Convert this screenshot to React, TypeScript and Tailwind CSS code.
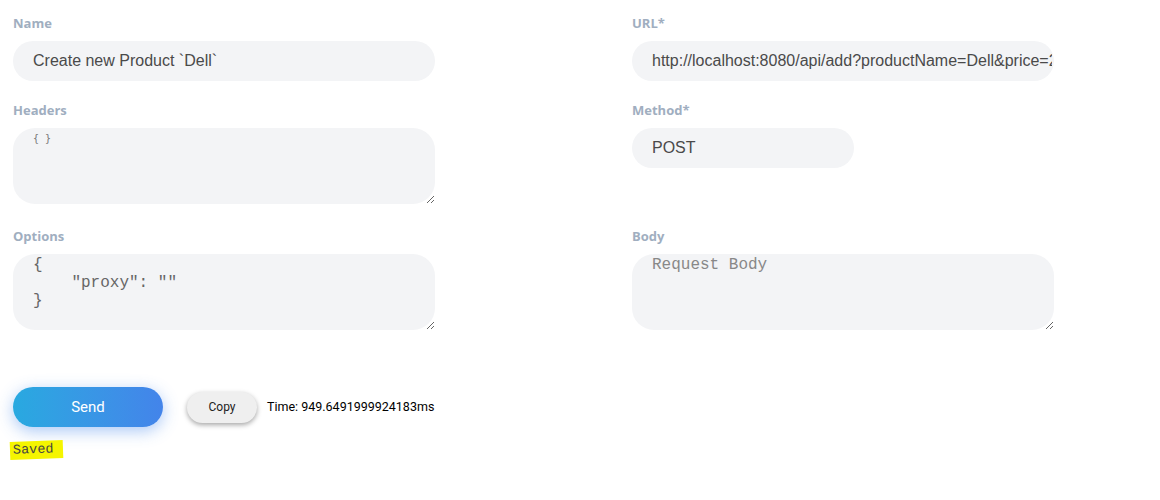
import React from "react";

const labelCls =
  "block h-[18px] mb-[9px] text-[13px] leading-[18px] font-bold text-[#a0aec0] [font-family:'Open_Sans',sans-serif]";
const inputCls =
  "block h-10 rounded-full bg-[#f3f4f6] pl-5 pr-0.5 text-[16px] text-[#4a4a4a] outline-none [font-family:'Liberation_Sans',Arial,sans-serif]";
const areaBase =
  "block h-[76px] w-[422px] rounded-[22px] bg-[#f3f4f6] pl-5 pr-2 outline-none placeholder:text-[#888]";
const areaCls = `${areaBase} pt-[2px] text-[16px] leading-[18px] text-[#666] [font-family:'Liberation_Mono','Courier_New',monospace]`;

export default function App() {
  return (
    <div className="min-h-[500px] w-[1160px] bg-white pt-[14px]">
      <div className="grid grid-cols-[619px_1fr] gap-y-[20px] pl-[13px]">
        <div>
          <label className={labelCls}>Name</label>
          <input className={`${inputCls} w-[422px]`} defaultValue="Create new Product `Dell`" />
        </div>
        <div>
          <label className={labelCls}>URL*</label>
          <input
            className={`${inputCls} w-[422px]`}
            defaultValue="http://localhost:8080/api/add?productName=Dell&price=2000"
          />
        </div>
        <div>
          <label className={labelCls}>Headers</label>
          <textarea
            className={`${areaBase} pt-1 text-[10px] leading-[14px] text-[#777] [font-family:'DejaVu_Sans_Mono',monospace]`}
            defaultValue="{ }"
          />
        </div>
        <div>
          <label className={labelCls}>Method*</label>
          <input className={`${inputCls} w-[222px]`} defaultValue="POST" />
        </div>
        <div className="pt-[3px]">
          <label className={labelCls}>Options</label>
          <textarea className={areaCls} defaultValue={'{\n    "proxy": ""\n}'} />
        </div>
        <div className="pt-[3px]">
          <label className={labelCls}>Body</label>
          <textarea className={areaCls} placeholder="Request Body" />
        </div>
      </div>

      <div className="mt-[57px] flex items-center pl-[13px]">
        <button className="h-10 w-[150px] rounded-full bg-gradient-to-r from-[#28a9e0] to-[#4384ea] text-[15px] font-normal text-white shadow-[0_4px_16px_rgba(66,133,234,0.45)] [font-family:Roboto,sans-serif]">
          Send
        </button>
        <button className="ml-6 h-[31px] w-[70px] rounded-full bg-[#efefef] text-[12px] text-[#222] shadow-[0_2px_5px_rgba(0,0,0,0.35)] [font-family:Roboto,sans-serif]">
          Copy
        </button>
        <span className="ml-[10px] text-[12.5px] text-black [font-family:Roboto,sans-serif]">
          Time: 949.6491999924183ms
        </span>
      </div>

      <div className="mt-[8px] pl-[10px]">
        <span className="inline-block -rotate-[2deg] bg-[#f5f500] pl-[3px] pr-[9px] text-[13.5px] leading-[18px] text-[#444] [font-family:'Liberation_Mono','Courier_New',monospace]">
          Saved
        </span>
      </div>
    </div>
  );
}
